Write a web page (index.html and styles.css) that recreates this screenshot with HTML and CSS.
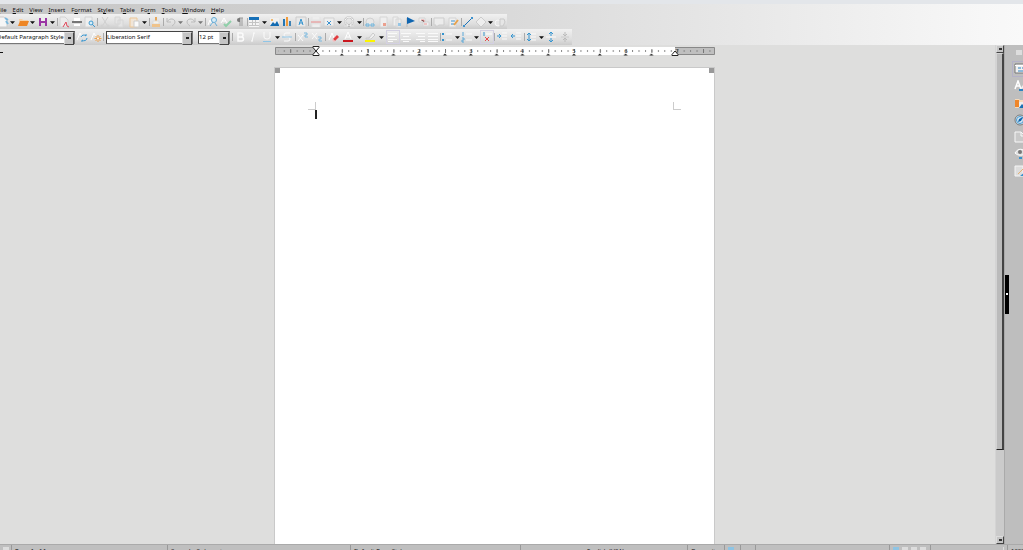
FILE: index.html
```html
<!DOCTYPE html>
<html lang="en">
<head>
<meta charset="utf-8">
<title>Untitled 1 - Writer</title>
<link rel="stylesheet" href="styles.css">
</head>
<body>
<svg class="sprite" aria-hidden="true">
  <symbol id="down" viewBox="0 0 6 12"><path d="M0 5h6L3 8.500z" fill="#111"/></symbol>
  <symbol id="down-dim" viewBox="0 0 6 12"><path d="M0 5h6L3 8.500z" fill="#777"/></symbol>
  <symbol id="new" viewBox="0 0 12 12"><path d="M2 1h5l3 3v7H2z" fill="#f6f6f6" stroke="#ccc"/><path d="M8 2l3 2M9 5l2 3" stroke="#7bb8dd" stroke-width="2"/></symbol>
  <symbol id="open" viewBox="0 0 12 12"><path d="M2 3h3l1 1h5v2H2z" fill="#f7d2a8"/><path d="M3 5h9l-2 5H1z" fill="#ee8625"/></symbol>
  <symbol id="save" viewBox="0 0 12 12"><path d="M2 2h8v8H8V7H4v3H2z" fill="#9a35a4"/><path d="M4 2h4v3H4z" fill="#eee"/></symbol>
  <symbol id="pdf" viewBox="0 0 12 12"><path d="M2 1h5l3 3v7H2z" fill="#ececec" stroke="#d4d4d4"/><path d="M5 11l3-5 1 4 2 1" fill="none" stroke="#e0485a"/></symbol>
  <symbol id="print" viewBox="0 0 12 12"><path d="M3 2h6v3H3zM3 8h6v2H3z" fill="#fff"/><path d="M1 5h10v2H1z" fill="#777"/></symbol>
  <symbol id="preview" viewBox="0 0 12 12"><path d="M1 1h7v10H1z" fill="#efefef" stroke="#d4d4d4"/><circle cx="7" cy="7" r="2" fill="#d6edf8" stroke="#3e9bd1"/><path d="M8 8l3 3" stroke="#3e9bd1"/></symbol>
  <symbol id="cut" viewBox="0 0 12 12"><path d="M3 1l5 8M9 1L4 9" stroke="#d0d0d0"/><circle cx="3" cy="10" r="1" fill="none" stroke="#d0d0d0"/><circle cx="9" cy="10" r="1" fill="none" stroke="#d0d0d0"/></symbol>
  <symbol id="copy" viewBox="0 0 12 12"><path d="M2 1h5v7H2zM5 4h5v7H5z" fill="#e4e4e4" stroke="#d6d6d6"/></symbol>
  <symbol id="paste" viewBox="0 0 12 12"><path d="M2 2h7v9H2z" fill="#f1e5d7" stroke="#edc797"/><path d="M6 5h5v6H6z" fill="#fafafa" stroke="#ccc"/></symbol>
  <symbol id="clone" viewBox="0 0 12 12"><path d="M5 1h2v4H5z" fill="#e5a85d"/><path d="M3 5h6v3H3z" fill="#f7f2e8" stroke="#ddd"/><path d="M2 8h8v3H2z" fill="#efc38b"/></symbol>
  <symbol id="undo" viewBox="0 0 12 12"><path d="M2 2v4h4M2 6c3-5 8-3 8 0 0 2-2 3-3 4" fill="none" stroke="#bcbcbc"/></symbol>
  <symbol id="redo" viewBox="0 0 12 12"><path d="M10 2v4H6M10 6C7 1 2 3 2 6c0 2 2 3 3 4" fill="none" stroke="#bcbcbc"/></symbol>
  <symbol id="find" viewBox="0 0 12 12"><path d="M1 9l2-5 2 5" stroke="#fff" fill="none"/><circle cx="7" cy="4" r="2.500" fill="#d8ecf7" stroke="#67acd6"/><path d="M6 6l-3 4M8 7l2 3" stroke="#67acd6"/></symbol>
  <symbol id="spell" viewBox="0 0 12 12"><path d="M1 7l3-5 3 5M2 5h4" stroke="#fff" fill="none"/><path d="M4 8l2 2 5-5" stroke="#8fcfa9" stroke-width="2" fill="none"/></symbol>
  <symbol id="pilcrow" viewBox="0 0 12 12"><path d="M5 2h4M6 2v8M8 2v8" stroke="#999"/><path d="M6 2H5a2 2 0 000 4h1z" fill="#777"/></symbol>
  <symbol id="table" viewBox="0 0 12 12"><path d="M1 2h10v9H1z" fill="#f4f4f4"/><path d="M1 1h10v3H1z" fill="#1670b8"/><path d="M1 6.500h10M1 9.500h10M4.500 4v6M7.500 4v6" stroke="#c4c4c4"/></symbol>
  <symbol id="image" viewBox="0 0 12 12"><path d="M2 2h9v8H2z" fill="#f0f0f0"/><path d="M2 10l3-4 2 2 2-3 2 4v1z" fill="#126bb1"/><circle cx="4" cy="4" r="1" fill="#eea747"/></symbol>
  <symbol id="chart" viewBox="0 0 12 12"><path d="M2 3h2v7H2z" fill="#2477b6"/><path d="M5 1h2v9H5z" fill="#f09b3c"/><path d="M8 5h2v5H8z" fill="#3f83b5"/></symbol>
  <symbol id="textbox" viewBox="0 0 12 12"><path d="M1 1h10v10H1z" fill="#e8e8e8" stroke="#ccc"/><path d="M4 9l2-6 2 6M4 7h4" fill="none" stroke="#3494cf"/></symbol>
  <symbol id="pagebreak" viewBox="0 0 12 12"><path d="M2 1v3h8V1M2 11V8h8v3" fill="#eee" stroke="#e4e4e4"/><path d="M1 6h10" stroke="#ec8c8c"/></symbol>
  <symbol id="field" viewBox="0 0 12 12"><path d="M1 2h10v8H1z" fill="#eee" stroke="#d2d2d2"/><path d="M4 5l4 4M8 5L4 9" stroke="#3c93cf"/></symbol>
  <symbol id="omega" viewBox="0 0 12 12"><path d="M1 10h4V9a4 4 0 112 0v1h4" fill="none" stroke="#bbb" stroke-width="2"/><path d="M1 10h4V9a4 4 0 112 0v1h4" fill="none" stroke="#fafafa"/></symbol>
  <symbol id="link" viewBox="0 0 12 12"><circle cx="6" cy="6" r="4" fill="#e7e7e7" stroke="#d0d0d0"/><path d="M2 8h3v2H2zM7 8h3v2H7z" fill="none" stroke="#6db5df"/></symbol>
  <symbol id="footnote" viewBox="0 0 12 12"><path d="M2 1h7v10H2z" fill="#efefef" stroke="#d6d6d6"/><path d="M5 7h3v3H5z" fill="#eba08e"/></symbol>
  <symbol id="endnote" viewBox="0 0 12 12"><path d="M2 1h5v9H2zM5 3h5v8H5z" fill="#efefef" stroke="#d6d6d6"/><path d="M7 7h3v3H7z" fill="#94c5e5"/></symbol>
  <symbol id="bookmark" viewBox="0 0 12 12"><path d="M3 2v9" stroke="#bbb"/><path d="M3 1l8 4-8 3z" fill="#0f65b0"/></symbol>
  <symbol id="crossref" viewBox="0 0 12 12"><path d="M1 2h6v4H1zM5 6h6v4H5z" fill="#efefef" stroke="#d4d4d4"/><path d="M3 4h3v2M6 8h3" stroke="#e99"/></symbol>
  <symbol id="comment" viewBox="0 0 12 12"><path d="M1 2h10v7H6l-3 2V9H1z" fill="#ececec" stroke="#cdcdcd"/></symbol>
  <symbol id="track" viewBox="0 0 12 12"><path d="M2 2h7v9H2z" fill="#efefef" stroke="#d4d4d4"/><path d="M4 5h4M4 8h3" stroke="#3c93cf"/><path d="M7 9l4-5" stroke="#e8a24b" stroke-width="2"/></symbol>
  <symbol id="line" viewBox="0 0 12 12"><path d="M2 10l8-8" stroke="#1b72b6"/><path d="M1 9h2v2H1zM9 1h2v2H9z" fill="#3d92ce"/></symbol>
  <symbol id="shape" viewBox="0 0 12 12"><path d="M6 1l5 5-5 5-5-5z" fill="#eee" stroke="#ccc"/></symbol>
  <symbol id="more" viewBox="0 0 12 12"><circle cx="4" cy="7" r="3" fill="#e6e6e6" stroke="#f7f7f7"/><path d="M6 3h4l1 3-2 4H6z" fill="#e6e6e6" stroke="#c9c9c9"/></symbol>
  <symbol id="refresh" viewBox="0 0 12 12"><path d="M1 9l3-7 2 4" stroke="#fff" fill="none"/><path d="M5 6a3 3 0 015-1V3M11 7a3 3 0 01-5 2v2" fill="none" stroke="#3494cf"/></symbol>
  <symbol id="newstyle" viewBox="0 0 12 12"><path d="M1 9l3-7 2 4" stroke="#fff" fill="none"/><path d="M8 4v7M4.500 7.500h7M5.500 5l5 5M10.500 5l-5 5" stroke="#efa14a"/><circle cx="8" cy="7.500" r="1" fill="#fff"/></symbol>
  <symbol id="bold" viewBox="0 0 12 12"><path d="M4 2h3a2 2 0 010 4H4zM4 6h3.500a2 2 0 010 4H4z" fill="none" stroke="#fbfbfb" stroke-width="1.500"/></symbol>
  <symbol id="italic" viewBox="0 0 12 12"><path d="M7 2L5 10M6 2h2M4 10h2" stroke="#fbfbfb"/></symbol>
  <symbol id="underline" viewBox="0 0 12 12"><path d="M3 1v5a3 2 0 006 0V1" fill="none" stroke="#fbfbfb"/><path d="M2 10.500h8" stroke="#8fc5e6"/></symbol>
  <symbol id="strike" viewBox="0 0 12 12"><path d="M9 2H5a2 2 0 000 4h2a2 2 0 010 4H3" fill="none" stroke="#fbfbfb"/><path d="M1 6h10" stroke="#8fc5e6"/></symbol>
  <symbol id="super" viewBox="0 0 12 12"><path d="M1 4l5 6M6 4l-5 6" stroke="#fbfbfb"/><path d="M7 2h3v2H8v2h3" fill="none" stroke="#7bb9df"/></symbol>
  <symbol id="sub" viewBox="0 0 12 12"><path d="M1 2l5 6M6 2L1 8" stroke="#fbfbfb"/><path d="M7 6h3v2H8v2h3" fill="none" stroke="#7bb9df"/></symbol>
  <symbol id="clear" viewBox="0 0 12 12"><path d="M1 9l3-7 2 5" stroke="#fff" fill="none"/><path d="M5 8l4-4 2 2-4 4z" fill="#e13c3f"/><path d="M4 9l1-1 2 2-1 1z" fill="#f5b9bb"/></symbol>
  <symbol id="fontcolor" viewBox="0 0 12 12"><path d="M3 8l3-7 3 7M4 6h4" fill="none" stroke="#fff"/><path d="M1 9h10v2H1z" fill="#c9171e"/></symbol>
  <symbol id="highlight" viewBox="0 0 12 12"><path d="M2 7h3l4-5 2 2-4 4H2z" fill="#f0f0f0" stroke="#ccc"/><path d="M1 9h10v2H1z" fill="#fcf500"/></symbol>
  <symbol id="left" viewBox="0 0 12 12"><path d="M1 2.500h9M1 5.500h7M1 8.500h9M1 10.500h5" stroke="#fafafa"/></symbol>
  <symbol id="center" viewBox="0 0 12 12"><path d="M1 2.500h10M3 5.500h6M1 8.500h10M3 10.500h6" stroke="#fafafa"/></symbol>
  <symbol id="right" viewBox="0 0 12 12"><path d="M2 2.500h9M4 5.500h7M2 8.500h9M6 10.500h5" stroke="#fafafa"/></symbol>
  <symbol id="justify" viewBox="0 0 12 12"><path d="M1 2.500h10M1 5.500h10M1 8.500h10M1 10.500h10" stroke="#fafafa"/></symbol>
  <symbol id="bullets" viewBox="0 0 12 12"><path d="M1 2h2v2H1zM1 8h2v2H1z" fill="#3494cf"/><path d="M5 3h6M5 9h6" stroke="#fafafa"/></symbol>
  <symbol id="numbers" viewBox="0 0 12 12"><path d="M2 1v4M1 7h2v2H1v2h2" fill="none" stroke="#5aa8d8"/><path d="M5 3h6M5 9h6" stroke="#fafafa"/></symbol>
  <symbol id="nolist" viewBox="0 0 12 12"><path d="M2 2h2M2 4h2" stroke="#3494cf"/><path d="M5 3h6" stroke="#fff"/><path d="M4 6l4 4M8 6l-4 4" stroke="#e4484c"/></symbol>
  <symbol id="indent" viewBox="0 0 12 12"><path d="M6 2h5M6 5h5M6 8h5" stroke="#fafafa"/><path d="M1 5h4M3 3l2 2-2 2" stroke="#3494cf" fill="none"/></symbol>
  <symbol id="outdent" viewBox="0 0 12 12"><path d="M6 2h5M6 5h5M6 8h5" stroke="#fafafa"/><path d="M1 5h4M3 3L1 5l2 2" stroke="#3494cf" fill="none"/></symbol>
  <symbol id="spacing" viewBox="0 0 12 12"><path d="M6 3h5M6 6h5M6 9h5" stroke="#fafafa"/><path d="M4 2v8M2 4l2-2 2 2M2 8l2 2 2-2" stroke="#3494cf" fill="none"/></symbol>
  <symbol id="parainc" viewBox="0 0 12 12"><path d="M1 6h10" stroke="#fafafa"/><path d="M6 1v4M4 3l2-2 2 2M6 7v4M4 9l2 2 2-2" stroke="#3494cf" fill="none"/></symbol>
  <symbol id="paradec" viewBox="0 0 12 12"><path d="M2 6h8" stroke="#ccc"/><path d="M6 1v4M4 3l2 2 2-2M6 7v4M4 9l2-2 2 2" stroke="#bbb" fill="none"/></symbol>
  <symbol id="s-properties" viewBox="0 0 12 12"><path d="M1 1h14v9H1z" fill="#f1f1f1" stroke="#777"/><path d="M1 2.500h12" stroke="#fff"/><path d="M4 5h3M8 5h4M4 8h5M10 8h2" stroke="#2d83c1"/></symbol>
  <symbol id="s-styles" viewBox="0 0 12 12"><path d="M1 9l3-8 3 8M2 6h4" fill="none" stroke="#fff" stroke-width="1.500"/><path d="M11 4l-4 5" stroke="#eee" stroke-width="2"/><path d="M5 10h4" stroke="#2d83c1" stroke-width="2"/></symbol>
  <symbol id="s-gallery" viewBox="0 0 12 12"><path d="M1 2h4l1 1h6v8H1z" fill="#f6d9b9"/><path d="M1 3h4v7H1z" fill="#ee862b"/><path d="M5 5h7v6H5z" fill="#eee"/><path d="M5 11l3-4 2 2 2-2v4z" fill="#1b70b3"/></symbol>
  <symbol id="s-navigator" viewBox="0 0 12 12"><circle cx="6" cy="6" r="5" fill="#d6e8f4" stroke="#777"/><circle cx="6" cy="6" r="3.500" fill="none" stroke="#4799cf"/><path d="M4 8l1-3 4-2-2 4z" fill="#1264aa"/></symbol>
  <symbol id="s-page" viewBox="0 0 12 12"><path d="M1 1h6l4 4v6H1z" fill="#c9c9c9" stroke="#f8f8f8"/><path d="M7 1v4h4" fill="none" stroke="#f8f8f8"/></symbol>
  <symbol id="s-inspector" viewBox="0 0 12 12"><path d="M1 5c3-5 8-5 11 0-3 3-8 3-11 0z" fill="#ddd" stroke="#fff"/><circle cx="6" cy="4" r="2" fill="#777"/><path d="M5 10h3M9 8h3" stroke="#3990cc" stroke-width="2"/></symbol>
  <symbol id="s-changes" viewBox="0 0 12 12"><path d="M1 1h8v10H1z" fill="#ddd" stroke="#f5f5f5"/><path d="M4 9l7-7" stroke="#e4b070"/><path d="M6 11h6V6z" fill="#3990cc"/></symbol>
</svg>

<header class="chrome">
  <div class="titlebar"></div>
  <nav class="menubar">
    <button><u>F</u>ile</button><button><u>E</u>dit</button><button><u>V</u>iew</button><button><u>I</u>nsert</button><button>F<u>o</u>rmat</button><button>St<u>y</u>les</button><button>T<u>a</u>ble</button><button>Fo<u>r</u>m</button><button><u>T</u>ools</button><button><u>W</u>indow</button><button><u>H</u>elp</button>
  </nav>

  <div class="toolbar standard" role="toolbar" aria-label="Standard">
    <div class="group first">
      <button class="tool" aria-label="New"><svg><use href="#new"/></svg></button><button class="drop" aria-label="New options"><svg><use href="#down"/></svg></button>
      <button class="tool" aria-label="Open"><svg><use href="#open"/></svg></button><button class="drop" aria-label="Open options"><svg><use href="#down"/></svg></button>
      <button class="tool" aria-label="Save"><svg><use href="#save"/></svg></button><button class="drop" aria-label="Save options"><svg><use href="#down"/></svg></button>
    </div>
    <div class="group">
      <button class="tool" aria-label="Export as PDF"><svg><use href="#pdf"/></svg></button>
      <button class="tool" aria-label="Print"><svg><use href="#print"/></svg></button>
      <button class="tool" aria-label="Print preview"><svg><use href="#preview"/></svg></button>
    </div>
    <div class="group">
      <button class="tool" aria-label="Cut"><svg><use href="#cut"/></svg></button>
      <button class="tool" aria-label="Copy"><svg><use href="#copy"/></svg></button>
      <button class="tool" aria-label="Paste"><svg><use href="#paste"/></svg></button><button class="drop" aria-label="Paste options"><svg><use href="#down"/></svg></button>
    </div>
    <div class="group">
      <button class="tool" aria-label="Clone formatting"><svg><use href="#clone"/></svg></button>
    </div>
    <div class="group">
      <button class="tool" aria-label="Undo"><svg><use href="#undo"/></svg></button><button class="drop" aria-label="Undo list"><svg><use href="#down-dim"/></svg></button>
      <button class="tool" aria-label="Redo"><svg><use href="#redo"/></svg></button><button class="drop" aria-label="Redo list"><svg><use href="#down-dim"/></svg></button>
    </div>
    <div class="group">
      <button class="tool" aria-label="Find and replace"><svg><use href="#find"/></svg></button>
      <button class="tool" aria-label="Spelling"><svg><use href="#spell"/></svg></button>
      <button class="tool" aria-label="Formatting marks"><svg><use href="#pilcrow"/></svg></button>
    </div>
    <div class="group">
      <button class="tool" aria-label="Table"><svg><use href="#table"/></svg></button><button class="drop" aria-label="Table options"><svg><use href="#down"/></svg></button>
      <button class="tool" aria-label="Image"><svg><use href="#image"/></svg></button>
      <button class="tool" aria-label="Chart"><svg><use href="#chart"/></svg></button>
      <button class="tool" aria-label="Text box"><svg><use href="#textbox"/></svg></button>
    </div>
    <div class="group">
      <button class="tool" aria-label="Page break"><svg><use href="#pagebreak"/></svg></button>
      <button class="tool" aria-label="Field"><svg><use href="#field"/></svg></button><button class="drop" aria-label="Field options"><svg><use href="#down"/></svg></button>
      <button class="tool" aria-label="Special character"><svg><use href="#omega"/></svg></button><button class="drop" aria-label="Character options"><svg><use href="#down"/></svg></button>
    </div>
    <div class="group">
      <button class="tool" aria-label="Hyperlink"><svg><use href="#link"/></svg></button>
      <button class="tool" aria-label="Footnote"><svg><use href="#footnote"/></svg></button>
      <button class="tool" aria-label="Endnote"><svg><use href="#endnote"/></svg></button>
      <button class="tool" aria-label="Bookmark"><svg><use href="#bookmark"/></svg></button>
      <button class="tool" aria-label="Cross-reference"><svg><use href="#crossref"/></svg></button>
    </div>
    <div class="group">
      <button class="tool" aria-label="Comment"><svg><use href="#comment"/></svg></button>
      <button class="tool" aria-label="Track changes"><svg><use href="#track"/></svg></button>
    </div>
    <div class="group">
      <button class="tool" aria-label="Line"><svg><use href="#line"/></svg></button>
      <button class="tool" aria-label="Shapes"><svg><use href="#shape"/></svg></button><button class="drop" aria-label="Shape options"><svg><use href="#down"/></svg></button>
      <button class="tool" aria-label="Draw functions"><svg><use href="#more"/></svg></button>
    </div>
  </div>

  <div class="toolbar formatting" role="toolbar" aria-label="Formatting">
    <div class="combo para"><select aria-label="Paragraph style"><option>Default Paragraph Style</option></select></div>
    <div class="group plain">
      <button class="tool" aria-label="Update style"><svg><use href="#refresh"/></svg></button>
      <button class="tool" aria-label="New style"><svg><use href="#newstyle"/></svg></button>
    </div>
    <div class="group fonts">
      <div class="combo font"><select aria-label="Font name"><option>Liberation Serif</option></select></div>
      <div class="combo size"><select aria-label="Font size"><option>12 pt</option></select></div>
    </div>
    <div class="group">
      <button class="tool" aria-label="Bold"><svg><use href="#bold"/></svg></button>
      <button class="tool" aria-label="Italic"><svg><use href="#italic"/></svg></button>
      <button class="tool" aria-label="Underline"><svg><use href="#underline"/></svg></button><button class="drop" aria-label="Underline options"><svg><use href="#down"/></svg></button>
      <button class="tool" aria-label="Strikethrough"><svg><use href="#strike"/></svg></button>
    </div>
    <div class="group">
      <button class="tool" aria-label="Superscript"><svg><use href="#super"/></svg></button>
      <button class="tool" aria-label="Subscript"><svg><use href="#sub"/></svg></button>
    </div>
    <div class="group">
      <button class="tool" aria-label="Clear formatting"><svg><use href="#clear"/></svg></button>
      <button class="tool" aria-label="Font color"><svg><use href="#fontcolor"/></svg></button><button class="drop" aria-label="Font color options"><svg><use href="#down"/></svg></button>
      <button class="tool" aria-label="Highlight"><svg><use href="#highlight"/></svg></button><button class="drop" aria-label="Highlight options"><svg><use href="#down"/></svg></button>
    </div>
    <div class="group">
      <button class="tool on" aria-label="Align left"><svg><use href="#left"/></svg></button>
      <button class="tool" aria-label="Align center"><svg><use href="#center"/></svg></button>
      <button class="tool" aria-label="Align right"><svg><use href="#right"/></svg></button>
      <button class="tool" aria-label="Justify"><svg><use href="#justify"/></svg></button>
    </div>
    <div class="group">
      <button class="tool" aria-label="Bullets"><svg><use href="#bullets"/></svg></button><button class="drop" aria-label="Bullet options"><svg><use href="#down"/></svg></button>
      <button class="tool" aria-label="Numbering"><svg><use href="#numbers"/></svg></button><button class="drop" aria-label="Numbering options"><svg><use href="#down"/></svg></button>
      <button class="tool on" aria-label="No list"><svg><use href="#nolist"/></svg></button>
    </div>
    <div class="group">
      <button class="tool" aria-label="Increase indent"><svg><use href="#indent"/></svg></button>
      <button class="tool" aria-label="Decrease indent"><svg><use href="#outdent"/></svg></button>
    </div>
    <div class="group">
      <button class="tool" aria-label="Line spacing"><svg><use href="#spacing"/></svg></button><button class="drop" aria-label="Line spacing options"><svg><use href="#down"/></svg></button>
      <button class="tool" aria-label="Increase paragraph spacing"><svg><use href="#parainc"/></svg></button>
      <button class="tool" aria-label="Decrease paragraph spacing"><svg><use href="#paradec"/></svg></button>
    </div>
  </div>
</header>

<div class="workspace">
  <main class="document">
    <span class="tabtype"></span>
    <svg class="ruler" viewBox="0 0 440 12" role="img" aria-label="Ruler">
      <defs>
        <pattern id="ticks" x="41" y="0" width="6.450" height="12" patternUnits="userSpaceOnUse"><path d="M0 4h1v2H0z" fill="#888"/></pattern>
        <pattern id="halves" x="41" y="0" width="25.800" height="12" patternUnits="userSpaceOnUse"><path d="M0 3h1v4H0z" fill="#777"/></pattern>
        <pattern id="tabs" x="54" y="0" width="25.800" height="12" patternUnits="userSpaceOnUse"><path d="M10.800 9.500l2-2 2 2z" fill="#222"/></pattern>
      </defs>
      <path d="M.5 1.500h439v7H.5z" fill="#bfbfbf" stroke="#888"/>
      <path d="M41 1h359v8H41z" fill="#fff"/>
      <path d="M3 1h434v8H3z" fill="url(#ticks)"/>
      <path d="M3 1h434v8H3z" fill="url(#halves)"/>
      <path d="M54 1h338v10H54z" fill="url(#tabs)"/>
      <g class="marks"><text x="93" y="7">1</text><text x="144" y="7">2</text><text x="196" y="7">3</text><text x="247" y="7">4</text><text x="299" y="7">5</text><text x="351" y="7">6</text><text x="402" y="7">7</text></g>
      <path d="M38 .5h6v1l-3 3.500-3-3.500zM38 9.500h6v-1l-3-3.500-3 3.500z" fill="#fff" stroke="#222"/>
      <path d="M397 9.500h6v-1l-3-3.500-3 3.500z" fill="#fff" stroke="#222"/>
    </svg>
    <div class="page">
      <div class="handles"><i></i><i></i></div>
      <div class="margins"><i class="corner start"></i><i class="corner end"></i></div>
      <div class="caret"></div>
    </div>
  </main>
  <div class="scrollbar">
    <button class="step" aria-label="Scroll up"></button>
    <div class="thumb"></div>
    <div class="track"></div>
    <button class="step down" aria-label="Scroll down"></button>
  </div>
  <aside class="sidebar">
    <button class="grip" aria-label="Hide sidebar"></button>
    <button class="menu" aria-label="Sidebar settings"></button>
    <button class="deck on" aria-label="Properties"><svg><use href="#s-properties"/></svg></button>
    <button class="deck" aria-label="Styles"><svg><use href="#s-styles"/></svg></button>
    <button class="deck" aria-label="Gallery"><svg><use href="#s-gallery"/></svg></button>
    <button class="deck" aria-label="Navigator"><svg><use href="#s-navigator"/></svg></button>
    <button class="deck" aria-label="Page"><svg><use href="#s-page"/></svg></button>
    <button class="deck" aria-label="Style inspector"><svg><use href="#s-inspector"/></svg></button>
    <button class="deck" aria-label="Manage changes"><svg><use href="#s-changes"/></svg></button>
  </aside>
</div>

<footer class="status">
  <span class="saved"><i></i></span>
  <span>Page 1 of 1</span>
  <span>0 words, 0 characters</span>
  <span>Default Page Style</span>
  <span class="mid">English (USA)</span>
  <span>Overwrite</span>
  <span class="selection"><i></i></span>
  <span></span>
  <span></span>
  <span class="views"><i class="blue"></i><i></i><i></i><i></i></span>
  <span class="zoom"><i></i></span>
  <span>100%</span>
</footer>
</body>
</html>
```
FILE: styles.css
```css
* { box-sizing: border-box; }

body {
  margin: 0;
  height: 100vh;
  overflow: hidden;
  display: flex;
  flex-direction: column;
  background: #dededd;
  color: #111;
  font: 6px/8px "Noto Sans", sans-serif;
}

button {
  margin: 0;
  padding: 0;
  border: 0;
  background: none;
  font: inherit;
  color: inherit;
}

svg { display: block; }
.sprite { display: none; }

.chrome {
  flex: none;
  background: linear-gradient(90deg, #c6c6c6 0, #cecece 25%, #dadada 50%, #e8e8e8 73%, #f7f7f7 96%, #f9f9f9 100%);
}

.titlebar {
  height: 4px;
  background: #e3e6ea;
}

.menubar {
  display: flex;
  gap: 6px;
  height: 10px;
  margin-left: -3px;
  padding-top: 2px;
}

.menubar u { text-underline-offset: 1px; text-decoration-thickness: 1px; }

.toolbar {
  display: grid;
  width: max-content;
  align-items: center;
  background: linear-gradient(#f1f1f1, #dedede 65%, #cbcbcb);
}

.standard {
  height: 15px;
  grid-template-columns: 57px 40px 52px 14px 42px 42px 61px 55px 68px 30px 46px;
}

.formatting {
  height: 16px;
  grid-template-columns: 75px 28px 129px 63px 30px 61px 54px 54px 30px 48px;
}

.group {
  display: flex;
  align-items: center;
  justify-content: space-evenly;
  height: 13px;
}

.group:not(.first):not(.plain) {
  background: linear-gradient(#aaa, #aaa) 0 50% / 1px 8px no-repeat;
}

.first { margin-left: -5px; }
.fonts { justify-content: flex-start; gap: 5px; padding-left: 3px; }

.tool, .tool svg { width: 12px; height: 12px; }
.drop, .drop svg { width: 5px; height: 10px; }
.tool.on { outline: 1px solid #d3d0e2; }

.combo {
  position: relative;
  height: 13px;
  border: 1px solid #444;
  border-right-color: #777;
  border-bottom-color: #777;
  background: #fff;
}

.combo select {
  appearance: none;
  width: 100%;
  height: 11px;
  border: 0;
  padding: 0 8px 0 0;
  background: none;
  color: #111;
  font: inherit;
  line-height: 11px;
}

.combo::after {
  content: "";
  position: absolute;
  top: 0;
  right: 0;
  width: 8px;
  height: 11px;
  border: 1px solid #ddd;
  border-right-color: #444;
  border-bottom-color: #444;
  background: linear-gradient(#222, #222) 50% 50% / 3px 2px no-repeat #c4c4c4;
  pointer-events: none;
}

.para { margin-left: -4px; }
.font { width: 87px; }
.size { width: 32px; }

.workspace {
  flex: 1;
  min-height: 0;
  display: flex;
}

.document {
  flex: 1;
  display: flex;
  flex-direction: column;
  align-items: center;
  position: relative;
  padding: 1px 6px 0 0;
  overflow: hidden;
}

.tabtype {
  position: absolute;
  left: 0;
  top: 7px;
  width: 3px;
  height: 1px;
  background: #111;
}

.ruler {
  flex: none;
  width: 440px;
  height: 12px;
}

.marks {
  font: 6px "Noto Sans", sans-serif;
  fill: #444;
  text-anchor: middle;
}

.page {
  flex: 1;
  width: 441px;
  margin-top: 9px;
  border: 1px solid #c9c9c9;
  border-bottom: 0;
  background: #fff;
}

.handles {
  display: flex;
  justify-content: space-between;
}

.handles i {
  width: 5px;
  height: 5px;
  background: #999;
}

.margins {
  display: flex;
  justify-content: space-between;
  padding: 29px 33px 0;
}

.corner {
  width: 8px;
  height: 8px;
  border-bottom: 1px solid #ccc;
}

.start { border-right: 1px solid #ccc; }
.end { border-left: 1px solid #ccc; }

.caret {
  width: 2px;
  height: 9px;
  margin-left: 40px;
  background: #222;
}

.scrollbar {
  width: 9px;
  display: flex;
  flex-direction: column;
  border-left: 1px solid #d4d4d4;
  background: #cbcbcb;
}

.step {
  height: 8px;
  border: 1px solid #ddd;
  border-right-color: #444;
  border-bottom-color: #444;
  background: linear-gradient(#333, #333) 50% 50% / 3px 2px no-repeat #c4c4c4;
}

.thumb {
  flex: 398;
  border: 1px solid #d4d4d4;
  border-right: 2px solid #444;
  border-bottom: 1px solid #222;
  background: #bbb;
}

.track { flex: 87; }

.sidebar {
  position: relative;
  width: 19px;
  display: flex;
  flex-direction: column;
  align-items: flex-start;
  padding: 5px 0 0 9px;
  gap: 5px;
  overflow: hidden;
  border-left: 1px solid #aaa;
  background: #bebebe;
}

.grip {
  position: absolute;
  left: 0;
  top: 46%;
  width: 4px;
  height: 39px;
  background: linear-gradient(#fff, #fff) 50% 50% / 2px 2px no-repeat #000;
}

.menu {
  width: 6px;
  height: 5px;
  margin: 0 0 3px 2px;
  background: #ddd;
}

.deck, .deck svg { width: 12px; height: 12px; }
.deck { flex: none; }
.deck.on { outline: 1px solid #b4b1c8; outline-offset: 1px; }

.status {
  flex: none;
  display: grid;
  grid-template-columns: 12px 156px 183px 170px 167px 37px 16px 15px 134px 41px 77px 1fr;
  height: 6px;
  overflow: hidden;
  border-top: 1px solid #aaa;
  background: #bfbfbf;
  white-space: nowrap;
}

.status span {
  padding: 2px 0 0 3px;
  border-right: 1px solid #999;
}

.status .mid { text-align: center; }
.status i {
  display: inline-block;
  width: 6px;
  height: 6px;
  margin-right: 3px;
  background: #ddd;
}
.status .selection i, .status .blue { background: #8dc4e4; }
.status .zoom { text-align: right; }
.status .zoom i { width: 1px; }
```
